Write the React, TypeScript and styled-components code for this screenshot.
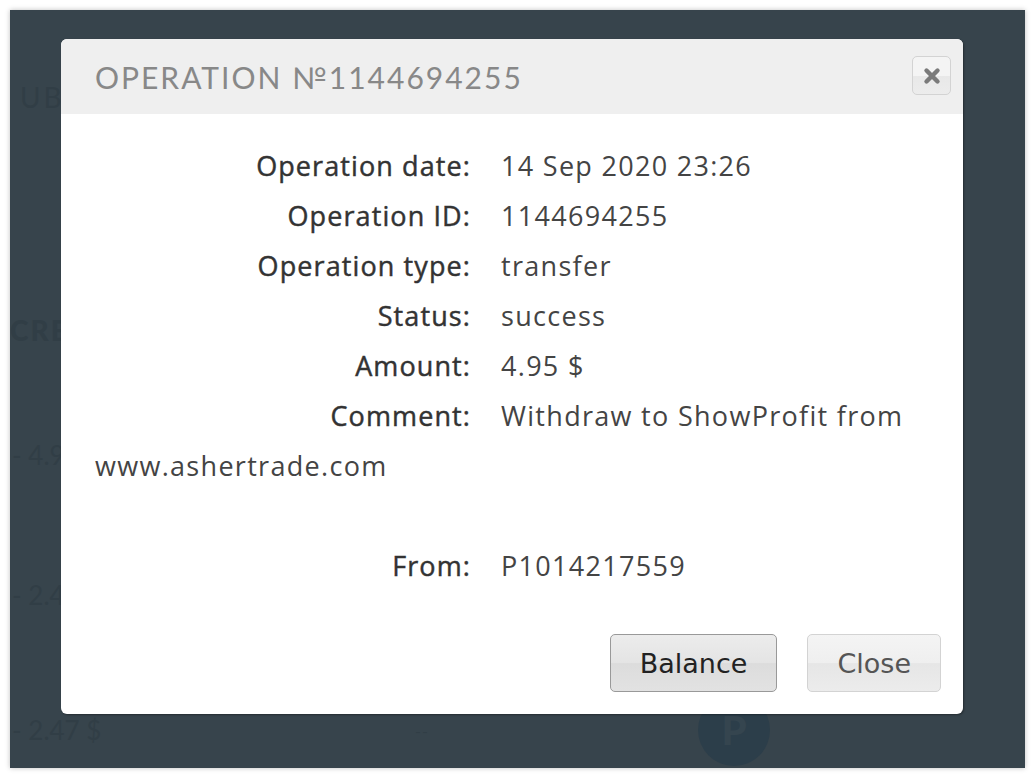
import * as React from "react";
import styled, { createGlobalStyle } from "styled-components";

// ページ全体の基本スタイル
const GlobalStyle = createGlobalStyle`
  html, body {
    margin: 0;
    padding: 0;
    background: #ffffff;
  }
  body {
    padding: 10px;
    font-family: "Lato", "Liberation Sans", sans-serif;
  }
`;

// スクリーンショットの枠（暗いオーバーレイ）
const Frame = styled.div`
  position: relative;
  width: 1015px;
  height: 758px;
  background: #37444c;
  box-shadow: 0 0 5px rgba(0, 0, 0, 0.25);
  overflow: hidden;
`;

// 背後のページ（オーバーレイ越しに薄く見える）
const GhostPage = styled.div`
  display: flex;
  flex-direction: column;
  color: #313e46;
  font-family: "Lato", "Liberation Sans", sans-serif;
`;

const GhostTitle = styled.div`
  margin: 70px 0 0 10px;
  font-size: 28px;
  letter-spacing: 3px;
  line-height: 34px;
`;

const GhostHeading = styled.div`
  margin-top: 199px;
  font-size: 28px;
  font-weight: 900;
  letter-spacing: 2px;
  line-height: 34px;
`;

const GhostRow = styled.div<{ $top: number }>`
  display: grid;
  grid-template-columns: 405px 283px 80px;
  align-items: center;
  margin-top: ${(p) => p.$top}px;
  height: 74px;
  font-size: 26px;
`;

const GhostAmount = styled.span`
  padding-left: 2px;
`;

const GhostDash = styled.span`
  font-size: 16px;
  letter-spacing: 1px;
`;

const GhostCoin = styled.div`
  width: 72px;
  height: 72px;
  border-radius: 50%;
  background: #2c3e4a;
  display: flex;
  align-items: center;
  justify-content: center;
  font-size: 40px;
  font-weight: 900;
  color: #35454f;
`;

// ダイアログ本体
const Dialog = styled.div`
  position: absolute;
  left: 51px;
  top: 29px;
  width: 902px;
  height: 675px;
  background: #ffffff;
  border-radius: 6px;
  box-shadow: 1px 1px 2px rgba(0, 0, 0, 0.35);
  display: flex;
  flex-direction: column;
  overflow: hidden;
`;

const DialogHeader = styled.div`
  display: flex;
  align-items: center;
  justify-content: space-between;
  height: 75px;
  padding: 0 12px 0 34px;
  background: #efefef;
`;

const DialogTitle = styled.h2`
  margin: 0;
  font-family: "Lato", "Liberation Sans", sans-serif;
  font-weight: 400;
  font-size: 30px;
  letter-spacing: 2px;
  color: #888888;
`;

const IconButton = styled.button`
  width: 39px;
  height: 39px;
  padding: 0;
  margin-bottom: 2px;
  border: 1px solid #d3d3d3;
  border-radius: 5px;
  background: linear-gradient(#f4f4f4 0%, #f4f4f4 50%, #e8e8e8 51%, #ececec 100%);
  display: flex;
  align-items: center;
  justify-content: center;
`;

const DialogBody = styled.div`
  flex: 1;
  padding: 27px 34px 0 34px;
  font-family: "Open Sans", "Liberation Sans", sans-serif;
  font-size: 27px;
  letter-spacing: 1.3px;
  line-height: 50px;
  color: #444444;
`;

const Label = styled.span`
  display: inline-block;
  width: 376px;
  margin-right: 30px;
  text-align: right;
  font-weight: 400;
  letter-spacing: 1.1px;
  color: #333333;
  -webkit-text-stroke: 0.45px #333333;
`;

const Line = styled.div<{ $gap?: boolean }>`
  margin-top: ${(p) => (p.$gap ? "50px" : "0")};
`;

const DialogFooter = styled.div`
  display: flex;
  justify-content: flex-end;
  gap: 30px;
  padding: 0 22px 22px;
`;

const Button = styled.button<{ $primary?: boolean }>`
  height: 58px;
  padding: 0 29px;
  border-radius: 5px;
  border: 1px solid ${(p) => (p.$primary ? "#999999" : "#d3d3d3")};
  background: ${(p) =>
    p.$primary
      ? "linear-gradient(#ececec 0%, #e4e4e4 50%, #dcdcdc 51%, #e2e2e2 100%)"
      : "linear-gradient(#f4f4f4 0%, #efefef 50%, #e6e6e6 51%, #ececec 100%)"};
  font-family: "DejaVu Sans", sans-serif;
  font-size: 27px;
  color: ${(p) => (p.$primary ? "#222222" : "#555555")};
`;

// 操作の詳細データ
const rows: { label: string; value: string }[] = [
  { label: "Operation date:", value: "14 Sep 2020 23:26" },
  { label: "Operation ID:", value: "1144694255" },
  { label: "Operation type:", value: "transfer" },
  { label: "Status:", value: "success" },
  { label: "Amount:", value: "4.95 $" },
  { label: "Comment:", value: "Withdraw to ShowProfit from www.ashertrade.com" },
];

export default function App() {
  return (
    <>
      <GlobalStyle />
      <Frame>
        {/* 背後のページ */}
        <GhostPage>
          <GhostTitle>UB</GhostTitle>
          <GhostHeading>CREI</GhostHeading>
          <GhostRow $top={71}>
            <GhostAmount>- 4.9</GhostAmount>
          </GhostRow>
          <GhostRow $top={66}>
            <GhostAmount>- 2.4</GhostAmount>
          </GhostRow>
          <GhostRow $top={61}>
            <GhostAmount>- 2.47 $</GhostAmount>
            <GhostDash>--</GhostDash>
            <GhostCoin>P</GhostCoin>
          </GhostRow>
        </GhostPage>

        {/* ダイアログ */}
        <Dialog>
          <DialogHeader>
            <DialogTitle>OPERATION №1144694255</DialogTitle>
            <IconButton aria-label="close">
              <svg width="18" height="18" viewBox="0 0 18 18">
                <path
                  d="M3.5 3.5 L14.5 14.5 M14.5 3.5 L3.5 14.5"
                  stroke="#7a7a7a"
                  strokeWidth="4.4"
                  strokeLinecap="round"
                />
              </svg>
            </IconButton>
          </DialogHeader>
          <DialogBody>
            {rows.map((row) => (
              <Line key={row.label}>
                <Label>{row.label}</Label>
                {row.value}
              </Line>
            ))}
            <Line $gap>
              <Label>From:</Label>
              P1014217559
            </Line>
          </DialogBody>
          <DialogFooter>
            <Button $primary>Balance</Button>
            <Button>Close</Button>
          </DialogFooter>
        </Dialog>
      </Frame>
    </>
  );
}
